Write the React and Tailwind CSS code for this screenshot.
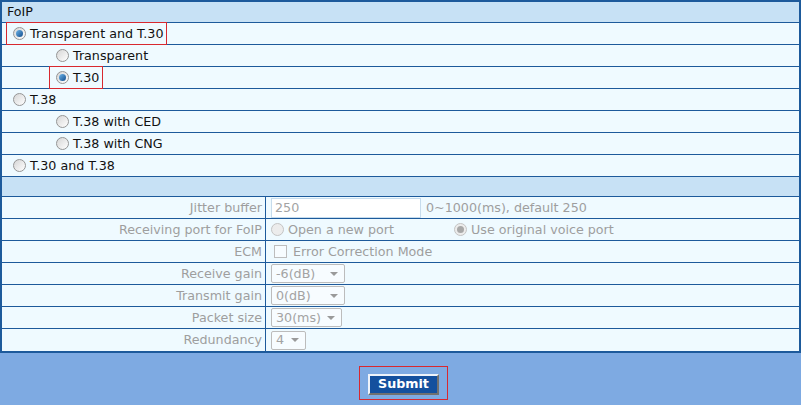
import React from 'react';

const font = { fontFamily: '"DejaVu Sans", Verdana, sans-serif' };

const Radio = ({ checked, disabled }) => (
  <span
    className={`inline-flex items-center justify-center w-[13px] h-[13px] rounded-full border shrink-0 ${
      disabled ? 'border-[#c4c4c4] bg-[#ececec]' : 'border-[#959595] bg-gradient-to-br from-[#d6d6d6] to-[#ffffff]'
    }`}
  >
    {checked && (
      <span
        className={`w-[7px] h-[7px] rounded-full ${
          disabled ? 'bg-[#a8a8a8]' : 'bg-gradient-to-br from-[#6fb6ea] to-[#0f4d8c]'
        }`}
      />
    )}
  </span>
);

const OptionRow = ({ label, checked, indent, boxed }) => (
  <div className="h-[22px] border-b border-[#1d5a9b] flex items-center">
    <div
      className={`flex items-center gap-[4px] h-[21px] ${indent ? 'ml-[48px] pl-[6px]' : 'ml-[5px] pl-[6px]'} ${
        boxed ? 'outline outline-1 outline-[#d8282f] pr-[3px]' : ''
      }`}
    >
      <Radio checked={checked} />
      <span className="text-[12.7px] text-[#111]">{label}</span>
    </div>
  </div>
);

const FormRow = ({ label, children, last }) => (
  <div className={`flex h-[22px] ${last ? '' : 'border-b border-[#1d5a9b]'}`}>
    <div className="w-[264px] shrink-0 border-r border-[#1d5a9b] flex items-center justify-end pr-[3px] text-[12.7px] text-[#9e9e9e]">
      {label}
    </div>
    <div className="flex items-center pl-[5px] text-[12.7px] text-[#9e9e9e]">{children}</div>
  </div>
);

const Select = ({ value, width }) => (
  <div
    className="h-[19px] border border-[#bcbcbc] rounded-[2px] bg-[#f7fcff] flex items-center justify-between pl-[4px] pr-[6px] text-[12.7px] text-[#a3a3a3]"
    style={{ width }}
  >
    <span>{value}</span>
    <span className="w-0 h-0 border-l-[4px] border-r-[4px] border-t-[4px] border-l-transparent border-r-transparent border-t-[#9a9a9a]" />
  </div>
);

export default function App() {
  return (
    <div className="w-[801px] h-[405px] bg-[#7eaae2] overflow-hidden" style={font}>
      <div className="border-2 border-[#1d5a9b] bg-[#effaff]">
        <div className="h-[21px] bg-[#c7e1f5] border-b border-[#1d5a9b] flex items-center pl-[5px] text-[12.7px] text-[#111]">
          FoIP
        </div>
        <OptionRow label="Transparent and T.30" checked boxed />
        <OptionRow label="Transparent" indent />
        <OptionRow label="T.30" indent checked boxed />
        <OptionRow label="T.38" />
        <OptionRow label="T.38 with CED" indent />
        <OptionRow label="T.38 with CNG" indent />
        <OptionRow label="T.30 and T.38" />
        <div className="h-[20px] bg-[#c7e1f5] border-b border-[#1d5a9b]" />
        <FormRow label="Jitter buffer">
          <div className="w-[150px] h-[20px] border border-[#c6dced] bg-white flex items-center pl-[3px] text-[#a3a3a3]">
            250
          </div>
          <span className="ml-[5px]">0~1000(ms), default 250</span>
        </FormRow>
        <FormRow label="Receiving port for FoIP">
          <div className="flex items-center gap-[4px] w-[183px]">
            <Radio disabled />
            <span>Open a new port</span>
          </div>
          <div className="flex items-center gap-[4px]">
            <Radio disabled checked />
            <span>Use original voice port</span>
          </div>
        </FormRow>
        <FormRow label="ECM">
          <span className="w-[13px] h-[13px] border border-[#bdbdbd] bg-[#f7fcff] ml-[3px] mr-[6px]" />
          <span>Error Correction Mode</span>
        </FormRow>
        <FormRow label="Receive gain">
          <Select value="-6(dB)" width={74} />
        </FormRow>
        <FormRow label="Transmit gain">
          <Select value="0(dB)" width={74} />
        </FormRow>
        <FormRow label="Packet size">
          <Select value="30(ms)" width={71} />
        </FormRow>
        <FormRow label="Redundancy" last>
          <Select value="4" width={35} />
        </FormRow>
      </div>
      <div className="flex justify-center pt-[13px] pl-[6px]">
        <div className="border border-[#d8282f] px-[8px] py-[4px]">
          <button
            className="h-[21px] px-[8px] bg-[#14509e] text-white font-bold text-[12.7px] leading-none border-2 border-t-[#eef3fa] border-l-[#eef3fa] border-r-[#707070] border-b-[#707070]"
            style={font}
          >
            Submit
          </button>
        </div>
      </div>
    </div>
  );
}
